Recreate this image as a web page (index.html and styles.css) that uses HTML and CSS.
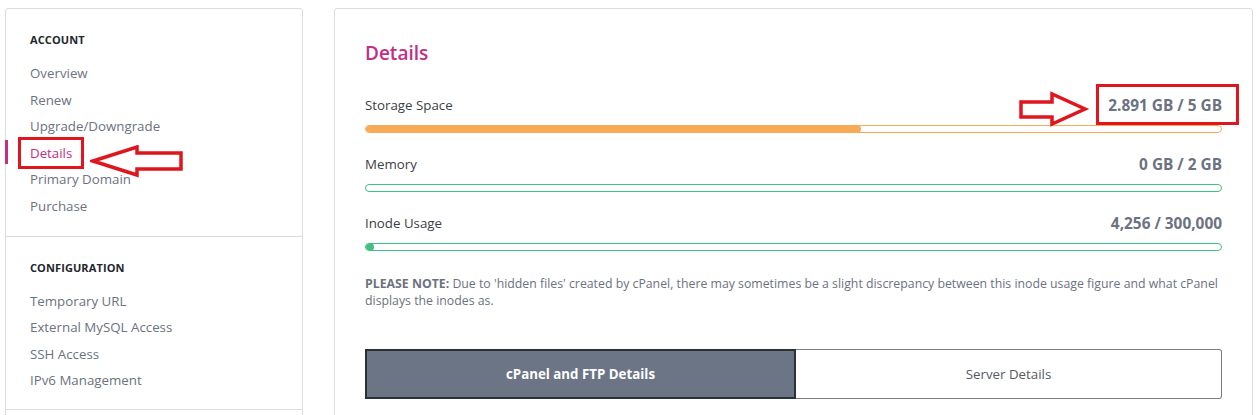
FILE: index.html
```html
<!DOCTYPE html>
<html lang="en">
<head>
<meta charset="utf-8">
<title>Details</title>
<link rel="stylesheet" href="styles.css">
</head>
<body>
<div class="page">
  <aside class="sidebar">
    <section class="side-section">
      <h4 class="side-head">ACCOUNT</h4>
      <ul class="side-links">
        <li><a href="#">Overview</a></li>
        <li><a href="#">Renew</a></li>
        <li><a href="#">Upgrade/Downgrade</a></li>
        <li class="active"><a href="#">Details</a></li>
        <li><a href="#">Primary Domain</a></li>
        <li><a href="#">Purchase</a></li>
      </ul>
      <div class="mark mark-details"></div>
      <svg class="arrow arrow-left" width="96" height="34" viewBox="0 0 96 34">
        <polygon points="3,16 47,2 47,8 91,8 91,24 47,24 47,30" fill="#fff" stroke="#e0161e" stroke-width="3.5" stroke-linejoin="miter"/>
      </svg>
    </section>
    <section class="side-section second">
      <h4 class="side-head">CONFIGURATION</h4>
      <ul class="side-links">
        <li><a href="#">Temporary URL</a></li>
        <li><a href="#">External MySQL Access</a></li>
        <li><a href="#">SSH Access</a></li>
        <li><a href="#">IPv6 Management</a></li>
      </ul>
    </section>
    <section class="side-section side-spacer"></section>
  </aside>

  <main class="main">
    <h2 class="title">Details</h2>

    <div class="stat">
      <div class="stat-row">
        <span class="stat-label">Storage Space</span>
        <span class="stat-value">2.891 GB / 5 GB</span>
      </div>
      <div class="bar bar-orange"><div class="fill" style="width:58%"></div></div>
      <div class="mark mark-value"></div>
      <svg class="arrow arrow-right" width="72" height="38" viewBox="0 0 72 38">
        <polygon points="3,11 34,11 34,3 67,18 34,33 34,26 3,26" fill="#fff" stroke="#e0161e" stroke-width="3.5" stroke-linejoin="miter"/>
      </svg>
    </div>

    <div class="stat">
      <div class="stat-row">
        <span class="stat-label">Memory</span>
        <span class="stat-value">0 GB / 2 GB</span>
      </div>
      <div class="bar bar-green"><div class="fill empty" style="width:0%"></div></div>
    </div>

    <div class="stat">
      <div class="stat-row">
        <span class="stat-label">Inode Usage</span>
        <span class="stat-value">4,256 / 300,000</span>
      </div>
      <div class="bar bar-green"><div class="fill" style="width:1%"></div></div>
    </div>

    <p class="note"><strong>PLEASE NOTE:</strong> Due to 'hidden files' created by cPanel, there may sometimes be a slight discrepancy between this inode usage figure and what cPanel displays the inodes as.</p>

    <div class="tabs">
      <button class="tab tab-active">cPanel and FTP Details</button>
      <button class="tab">Server Details</button>
    </div>
  </main>
</div>
</body>
</html>
```

FILE: styles.css
```css
* { box-sizing: border-box; }

html, body {
  margin: 0;
  padding: 0;
  background: #fff;
}

body {
  font-family: "Open Sans", "Liberation Sans", sans-serif;
  color: #3b4048;
}

.page {
  display: flex;
  align-items: flex-start;
  gap: 31px;
  padding: 8px 4px 0 5px;
}

/* Sidebar */
.sidebar {
  width: 298px;
  flex: none;
  border: 1px solid #dcdcdc;
  border-radius: 3px;
  background: #fff;
}

.side-section {
  position: relative;
  padding: 24px 24px 18px;
  border-bottom: 1px solid #dcdcdc;
}

.side-section.second {
  padding: 24px 24px 17px;
}

.side-spacer {
  border-bottom: none;
  height: 60px;
}

.side-head {
  margin: 0 0 12px;
  font-size: 11px;
  line-height: 14px;
  font-weight: 700;
  color: #23262b;
  letter-spacing: 0.1px;
}

.side-links {
  list-style: none;
  margin: 0;
  padding: 0;
}

.side-links li {
  position: relative;
  line-height: 26.5px;
  height: 26.5px;
}

.second .side-links li {
  line-height: 26.3px;
  height: 26.3px;
}

.side-links a {
  font-size: 13.3px;
  color: #6c7281;
  text-decoration: none;
}

.side-links li.active a {
  color: #c22f83;
}

.side-links li.active::before {
  content: "";
  position: absolute;
  left: -25px;
  top: 1px;
  width: 3px;
  height: 24px;
  background: #c22f83;
}

/* Annotations */
.mark {
  position: absolute;
  border: 3.5px solid #e0161e;
}

.mark-details {
  left: 12px;
  top: 128px;
  width: 66px;
  height: 32px;
}

.arrow {
  position: absolute;
}

.arrow-left {
  left: 84px;
  top: 136px;
}

.mark-value {
  right: -17px;
  top: -11px;
  width: 143px;
  height: 41px;
}

.arrow-right {
  right: 132px;
  top: -4px;
}

/* Main */
.main {
  flex: 1;
  min-width: 0;
  border: 1px solid #dcdcdc;
  border-radius: 3px;
  padding: 31px 30px 30px;
  min-height: 460px;
}

.title {
  margin: 0 0 29px;
  font-size: 19px;
  line-height: 26px;
  font-weight: 600;
  color: #c22f83;
}

.stat {
  position: relative;
  margin-bottom: 21px;
}

.stat-row {
  display: flex;
  justify-content: space-between;
  align-items: center;
  height: 20px;
  margin-bottom: 10px;
}

.stat-label {
  font-size: 13.3px;
  color: #3b4048;
}

.stat-value {
  font-size: 15.4px;
  font-weight: 700;
  color: #6c7281;
}

.bar {
  height: 8px;
  border-radius: 4px;
  border: 1px solid;
  overflow: hidden;
}

.bar .fill {
  height: 8px;
  min-width: 8px;
  border-radius: 4px;
  margin-top: -1px;
  margin-left: -1px;
}

.bar .fill.empty { min-width: 0; }

.bar-orange { border-color: #f7ab57; }
.bar-orange .fill { background: #f7ab57; }

.bar-green { border-color: #41c082; }
.bar-green .fill { background: #41c082; }

.note {
  margin: 24px 0 0;
  font-size: 12.3px;
  line-height: 17px;
  color: #6c7281;
}

.note strong {
  font-weight: 700;
}

.tabs {
  display: flex;
  margin-top: 40px;
  height: 50px;
}

.tab {
  flex: 1;
  font-family: inherit;
  font-size: 13.3px;
  cursor: pointer;
  background: #fff;
  color: #555a61;
  border: 1px solid #7a7e84;
  border-left: none;
  border-radius: 0 3px 3px 0;
}

.tab-active {
  flex: 0 0 431px;
  background: #6b7586;
  color: #fff;
  font-weight: 700;
  border: 2px solid #2c3135;
  border-radius: 0;
}
```
